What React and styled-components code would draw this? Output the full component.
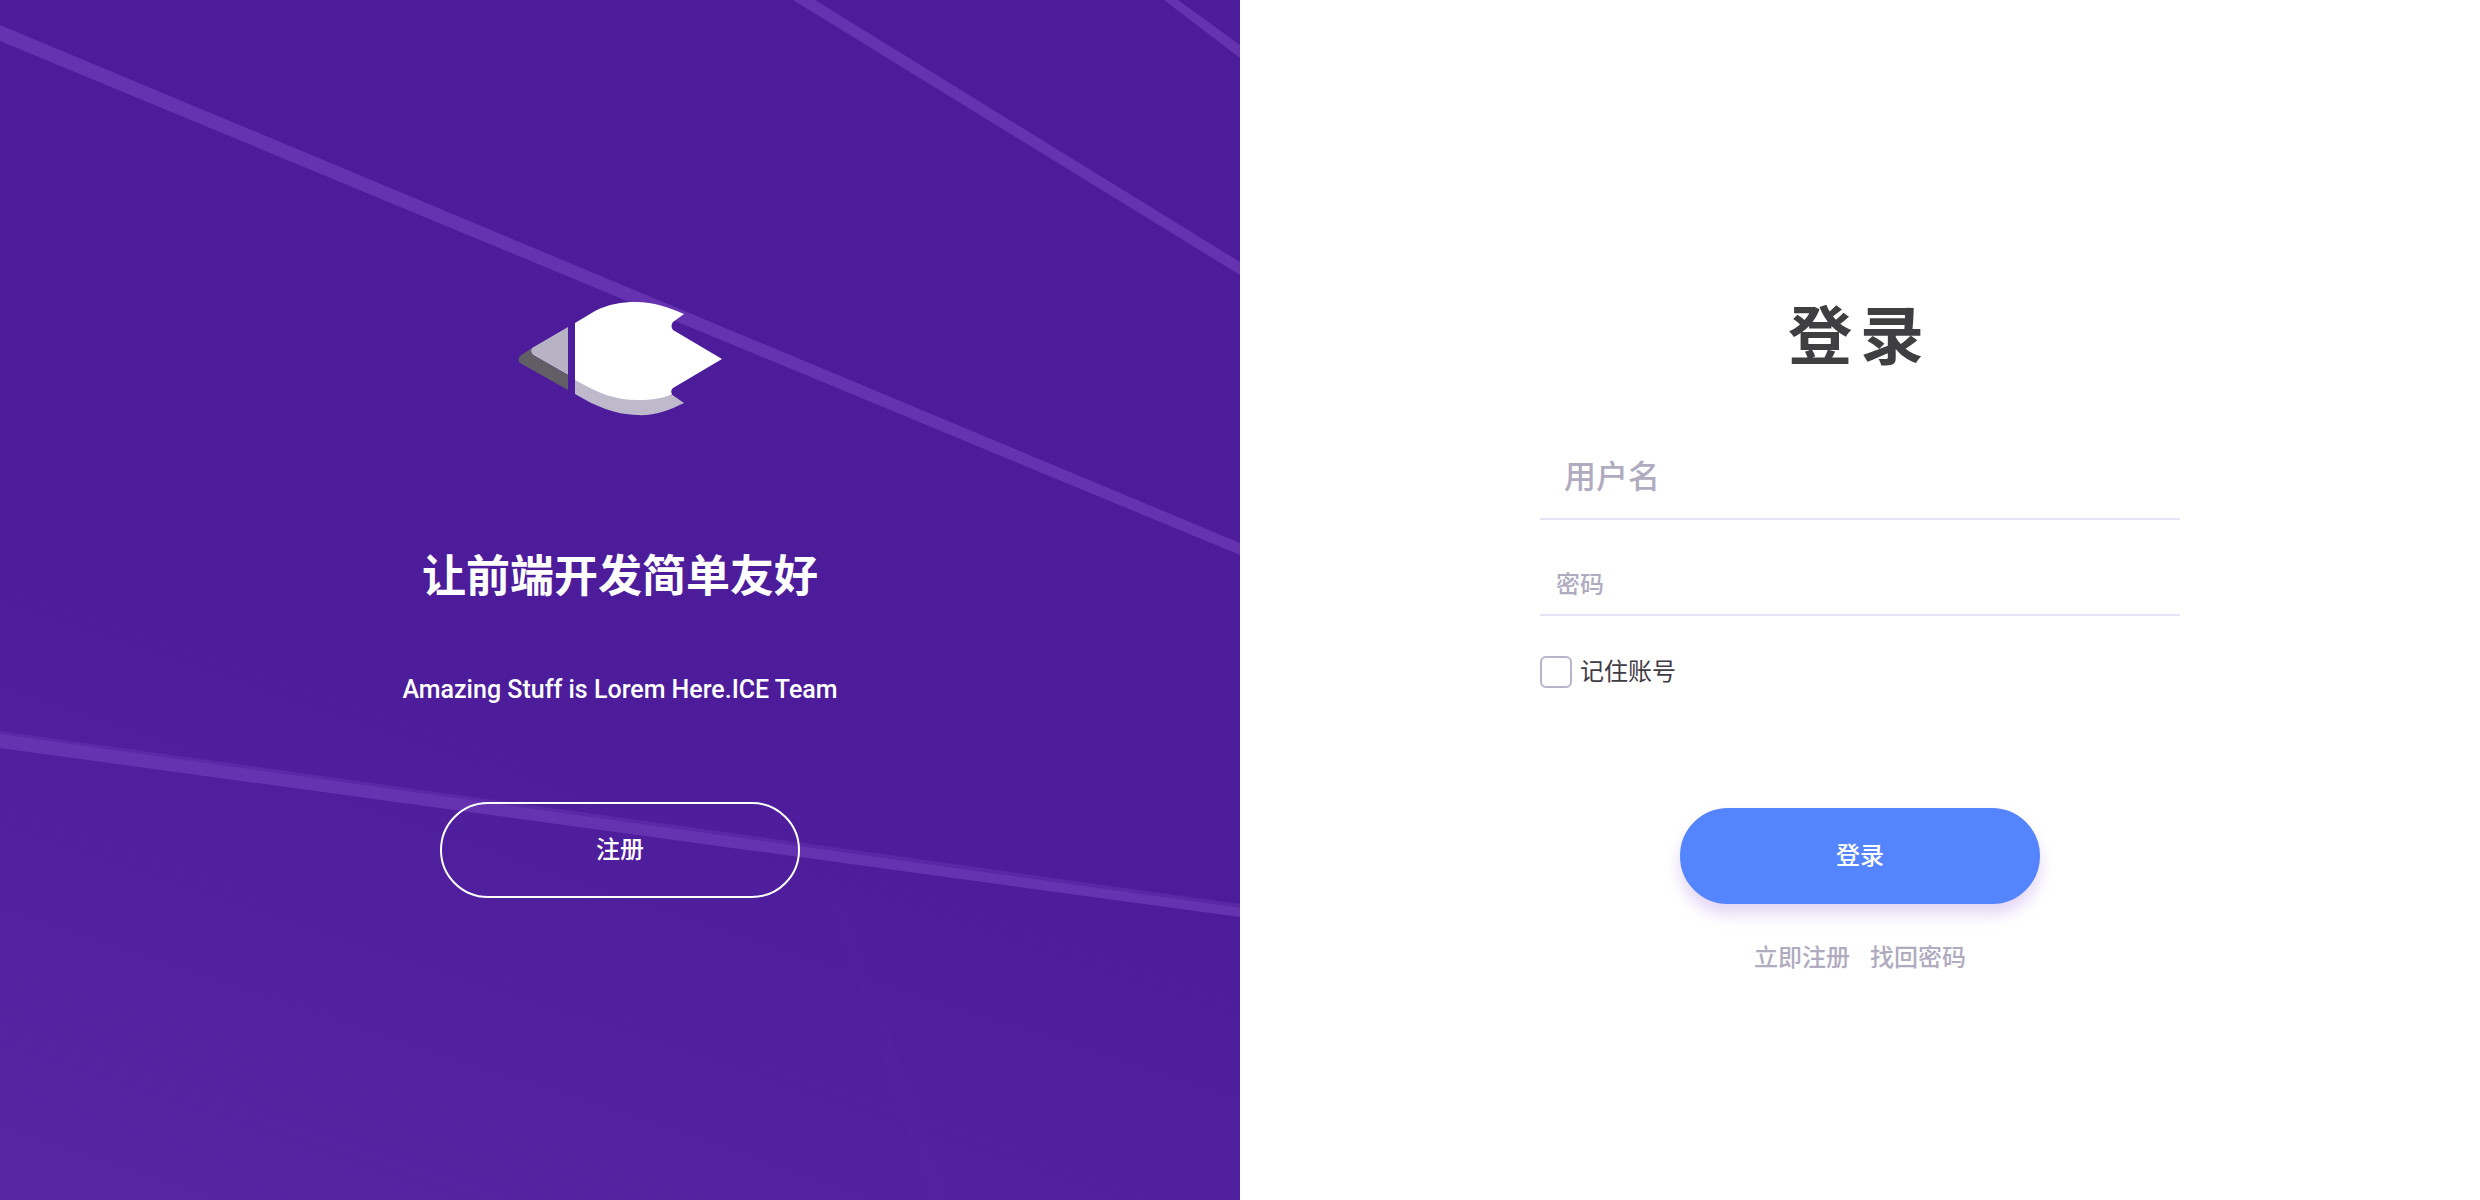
import React from "react";
import styled, { createGlobalStyle } from "styled-components";

const GlobalStyle = createGlobalStyle`
  *, *::before, *::after { box-sizing: border-box; }
  body {
    margin: 0;
    background: #fff;
    font-family: Roboto, "Noto Sans CJK SC", sans-serif;
    font-size: 24px;
    line-height: 36px;
  }
  h1, h2, p { margin: 0; }
  button, input { font: inherit; }
`;

const Page = styled.main`
  display: grid;
  grid-template-columns: 1fr 1fr;
  min-height: 100vh;
`;

const Intro = styled.section`
  position: relative;
  isolation: isolate;
  overflow: hidden;
  display: flex;
  flex-direction: column;
  align-items: center;
  justify-content: center;
  background: #4d1c9b;
  color: #fff;
  text-align: center;
`;

const Backdrop = styled.svg`
  position: absolute;
  inset: 0;
  z-index: -1;
  width: 100%;
  height: 100%;
`;

const Logo = styled.svg`
  width: 204px;
  height: 114px;
`;

const Slogan = styled.h2`
  margin-top: 128px;
  font-size: 44px;
  line-height: 66px;
  font-weight: 700;
`;

const Tagline = styled.p`
  margin-top: 64px;
  font-size: 25px;
  line-height: 32px;
  font-weight: 500;
`;

const PillButton = styled.button`
  width: 360px;
  height: 96px;
  border-radius: 48px;
  border: 2px solid ${(p) => (p.$filled ? "#5584ff" : "#fff")};
  background: ${(p) => (p.$filled ? "#5584ff" : "transparent")};
  box-shadow: ${(p) => (p.$filled ? "0 10px 16px #e2d5f5" : "none")};
  color: #fff;
  font-weight: 500;
  cursor: pointer;
`;

const RegisterButton = styled(PillButton)`
  margin-top: 96px;
`;

const SignIn = styled.section`
  display: flex;
  flex-direction: column;
  align-items: center;
  justify-content: center;
  padding-top: 66px;
  background: #fff;
`;

const Form = styled.form`
  display: flex;
  flex-direction: column;
  align-items: center;
  width: 640px;
  max-width: 100%;
`;

const Title = styled.h1`
  color: #3f3f41;
  font-size: 64px;
  line-height: 96px;
  font-weight: 700;
  letter-spacing: 8px;
`;

const TextField = styled.input`
  width: 100%;
  height: ${(p) => (p.$large ? 88 : 64)}px;
  margin-top: ${(p) => (p.$large ? 46 : 32)}px;
  padding: 4px ${(p) => (p.$large ? 24 : 16)}px 0;
  border: 0;
  border-bottom: 2px solid #e9e2f7;
  outline: 0;
  background: transparent;
  color: #3f3f41;
  font-size: ${(p) => (p.$large ? 32 : 24)}px;
  font-weight: 500;

  &::placeholder {
    color: #b0abbf;
    opacity: 1;
  }
`;

const Remember = styled.label`
  display: flex;
  align-items: center;
  align-self: flex-start;
  gap: 8px;
  margin-top: 38px;
  color: #3f3b45;
`;

const Checkbox = styled.input`
  appearance: none;
  width: 32px;
  height: 32px;
  margin: 0;
  border: 2px solid #bab3ca;
  border-radius: 6px;
  background: #fff;

  &:checked { background: #5584ff; }
`;

const LoginButton = styled(PillButton)`
  margin-top: 118px;
`;

const Links = styled.nav`
  display: flex;
  gap: 20px;
  margin-top: 36px;
`;

const TextLink = styled.a`
  color: #b0abbf;
  font-weight: 500;
  text-decoration: none;
`;

function Beams() {
  return (
    <Backdrop viewBox="0 0 1240 1200" preserveAspectRatio="xMidYMid slice" aria-hidden="true">
      <defs>
        <linearGradient id="glow" gradientUnits="userSpaceOnUse" x1="200" y1="1300" x2="420" y2="640">
          <stop offset="0" stopColor="#5726a3" />
          <stop offset="1" stopColor="#4d1c9b" />
        </linearGradient>
      </defs>
      <rect width="1240" height="1200" fill="url(#glow)" />
      <g fill="#6633b0">
        <path d="M0 25 1240 543V555L0 41Z" />
        <path d="M793 0H815L1240 262V275Z" />
        <path d="M1164 0H1178L1240 45V58Z" />
        <path d="M0 731 1240 904V917L0 748Z" opacity="0.5" />
        <path d="M0 734 1240 908V917L0 748Z" />
        <path d="M830 900H842L950 1200H930Z" opacity="0.1" />
      </g>
    </Backdrop>
  );
}

function Mark() {
  return (
    <Logo viewBox="0 0 204 114" role="img" aria-label="ICE">
      <path d="M57 70 118 90 153 92 166 101C150 109 136 114 118 113 96 112 79 105 57 92Z" fill="#bfbacb" />
      <path d="M57 21 77 9C91 2 103 0 118 0 136 0 150 5 166 12L155 20Q152 24 155 28L204 57 155 86Q152 89 154 92C146 96 134 98 120 98 96 98 80 91 57 78Z" fill="#fff" />
      <path d="M14 46 50 25V73L15 53Q11 49 14 46Z" fill="#b8b2c5" />
      <path d="M14 46Q12 50 15 53L50 73V88L2 61Q-1 57 2 54Z" fill="#615e66" />
    </Logo>
  );
}

export default function App() {
  return (
    <>
      <GlobalStyle />
      <Page lang="zh-CN">
        <Intro>
          <Beams />
          <Mark />
          <Slogan>让前端开发简单友好</Slogan>
          <Tagline>Amazing Stuff is Lorem Here.ICE Team</Tagline>
          <RegisterButton type="button">注册</RegisterButton>
        </Intro>
        <SignIn>
          <Form onSubmit={(e) => e.preventDefault()}>
            <Title>登录</Title>
            <TextField $large type="text" name="username" placeholder="用户名" aria-label="用户名" />
            <TextField type="password" name="password" placeholder="密码" aria-label="密码" />
            <Remember>
              <Checkbox type="checkbox" name="remember" />
              记住账号
            </Remember>
            <LoginButton $filled type="submit">登录</LoginButton>
            <Links>
              <TextLink href="#register">立即注册</TextLink>
              <TextLink href="#recover">找回密码</TextLink>
            </Links>
          </Form>
        </SignIn>
      </Page>
    </>
  );
}
